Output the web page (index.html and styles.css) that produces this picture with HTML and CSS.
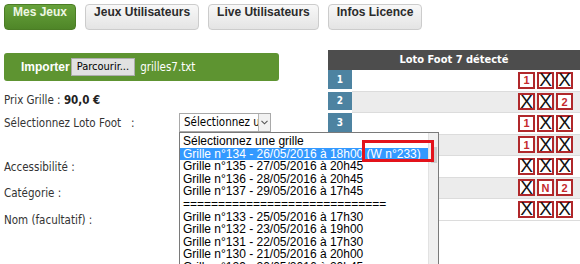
FILE: index.html
```html
<!DOCTYPE html>
<html lang="fr">
<head>
    <meta charset="UTF-8">
    <meta name="viewport" content="width=device-width, initial-scale=1.0">
    <title>Mes Jeux</title>
    <link rel="stylesheet" href="styles.css">
</head>
<body>
    <nav class="tabs">
        <a href="#" class="tab active">Mes Jeux</a>
        <a href="#" class="tab">Jeux Utilisateurs</a>
        <a href="#" class="tab">Live Utilisateurs</a>
        <a href="#" class="tab">Infos Licence</a>
    </nav>

    <div class="main">
        <div class="left">
            <div class="import">
                <b>Importer</b>
                <span class="browse">Parcourir...</span>
                <span class="filename">grilles7.txt</span>
            </div>

            <p class="field prix">Prix Grille : <b>90,0 €</b></p>

            <div class="select-row">
                <label>Sélectionnez Loto Foot &nbsp;&nbsp;:</label>
                <div class="select-wrap">
                    <div class="select">Sélectionnez une grille
                        <span class="arrow">
                            <svg width="7" height="5" viewBox="0 0 7 5"><path d="M0.5 0.8 L3.5 3.8 L6.5 0.8" fill="none" stroke="#555" stroke-width="1.1"/></svg>
                        </span>
                    </div>
                    <div class="dropdown">
                        <ul>
                            <li>Sélectionnez une grille</li>
                            <li class="sel">Grille n°134 - 26/05/2016 à 18h00 (W n°233)</li>
                            <li>Grille n°135 - 27/05/2016 à 20h45</li>
                            <li>Grille n°136 - 28/05/2016 à 20h45</li>
                            <li>Grille n°137 - 29/05/2016 à 17h45</li>
                            <li>=============================</li>
                            <li>Grille n°133 - 25/05/2016 à 17h30</li>
                            <li>Grille n°132 - 23/05/2016 à 19h00</li>
                            <li>Grille n°131 - 22/05/2016 à 17h30</li>
                            <li>Grille n°130 - 21/05/2016 à 20h00</li>
                            <li>Grille n°129 - 20/05/2016 à 20h45</li>
                        </ul>
                        <div class="scrollbar"><div class="thumb"></div></div>
                        <div class="mark"></div>
                    </div>
                </div>
            </div>

            <p class="field access">Accessibilité :</p>
            <p class="field cat">Catégorie :</p>
            <p class="field nom">Nom (facultatif) :</p>
        </div>

        <div class="panel">
            <div class="panel-head">Loto Foot 7 détecté</div>
            <div class="row"><span class="num">1</span><span class="picks"><span class="pick">1</span><span class="pick x">X</span><span class="pick x">X</span></span></div>
            <div class="row"><span class="num">2</span><span class="picks"><span class="pick x">X</span><span class="pick x">X</span><span class="pick">2</span></span></div>
            <div class="row"><span class="num">3</span><span class="picks"><span class="pick">1</span><span class="pick x">X</span><span class="pick x">X</span></span></div>
            <div class="row"><span class="num">4</span><span class="picks"><span class="pick">1</span><span class="pick x">X</span><span class="pick x">X</span></span></div>
            <div class="row"><span class="num">5</span><span class="picks"><span class="pick x">X</span><span class="pick x">X</span><span class="pick x">X</span></span></div>
            <div class="row"><span class="num">6</span><span class="picks"><span class="pick x">X</span><span class="pick">N</span><span class="pick">2</span></span></div>
            <div class="row"><span class="num">7</span><span class="picks"><span class="pick x">X</span><span class="pick x">X</span><span class="pick x">X</span></span></div>
        </div>
    </div>
</body>
</html>
```

FILE: styles.css
```css
* {
    margin: 0;
    padding: 0;
    box-sizing: border-box;
}

body {
    font-family: "DejaVu Sans Condensed", "Liberation Sans", sans-serif;
    font-size: 11.5px;
    color: #333;
    background-color: #fff;
    width: 580px;
    height: 264px;
    overflow: hidden;
}

/* Onglets */
.tabs {
    display: flex;
    gap: 9px;
    padding: 4px 0 0 4px;
}

.tab {
    height: 26px;
    line-height: 24px;
    padding: 0 8px;
    border: 1px solid #ccc;
    border-radius: 4px;
    background: linear-gradient(#f8f8f8, #e4e4e4);
    font: bold 12px "Liberation Sans", Arial, sans-serif;
    color: #2b2b2b;
    text-decoration: none;
}

.tab.active {
    background: linear-gradient(#67a23b, #4f8628);
    border-color: #4b7d25;
    color: #eef7e4;
}

.main {
    display: flex;
    margin-top: 20px;
}

.left {
    width: 275px;
    margin-left: 4px;
    position: relative;
    z-index: 2;
}

.import {
    margin-top: 3px;
    height: 28px;
    background-color: #5e9431;
    border-radius: 3px;
    display: flex;
    align-items: center;
    padding-left: 17px;
    color: #fff;
}

.import b {
    font: bold 12px "Liberation Sans", Arial, sans-serif;
}

.browse {
    margin-left: 1px;
    height: 18px;
    line-height: 16px;
    padding: 0 5px;
    background-color: #e1e1e1;
    border: 1px solid #adadad;
    color: #000;
    font-size: 11px;
}

.filename {
    margin-left: 5px;
}

.field {
    line-height: 14px;
}

.prix {
    margin-top: 12px;
}

.prix b {
    color: #222;
}

.select-row {
    display: flex;
    align-items: center;
    margin-top: 6px;
    height: 19px;
}

.select-row label {
    width: 175px;
}

.select-wrap {
    position: relative;
    width: 92px;
    height: 19px;
}

.select {
    position: relative;
    height: 19px;
    line-height: 17px;
    padding-left: 4px;
    border: 1px solid #a9a9a9;
    white-space: nowrap;
    overflow: hidden;
    color: #000;
}

.arrow {
    position: absolute;
    right: 0;
    top: 0;
    width: 12px;
    height: 17px;
    border-left: 1px solid #b5b5b5;
    background-color: #f1f1f1;
    display: flex;
    align-items: center;
    justify-content: center;
}

/* Liste deroulante ouverte */
.dropdown {
    position: absolute;
    left: 0;
    top: 19px;
    width: 260px;
    height: 140px;
    background-color: #fff;
    border: 1px solid #7a7a7a;
    overflow: hidden;
    color: #000;
}

.dropdown ul {
    list-style: none;
    padding-top: 2px;
    margin-right: 10px;
    font: 12px "Liberation Sans", Arial, sans-serif;
    line-height: 12.6px;
}

.dropdown li {
    padding-left: 3px;
    white-space: nowrap;
}

.dropdown li.sel {
    background-color: #3399ff;
    color: #fff;
}

.scrollbar {
    position: absolute;
    right: 0;
    top: 0;
    bottom: 0;
    width: 10px;
    background-color: #f0f0f0;
    border-left: 1px solid #e2e2e2;
}

.thumb {
    margin: 14px 1px 0 2px;
    height: 16px;
    background-color: #cdcdcd;
}

.mark {
    position: absolute;
    left: 182px;
    top: 7px;
    width: 72px;
    height: 22px;
    border: 3px solid #e3131b;
}

.access {
    margin-top: 28px;
}

.cat {
    margin-top: 12px;
}

.nom {
    margin-top: 13px;
}

/* Tableau des grilles */
.panel {
    margin-left: 49px;
    width: 252px;
}

.panel-head {
    height: 20px;
    line-height: 20px;
    background-color: #4d4d4d;
    color: #fff;
    font-weight: bold;
    font-size: 11px;
    text-align: center;
}

.row {
    display: flex;
    height: 21.5px;
}

.num {
    width: 24px;
    background-color: #4d83a1;
    border-bottom: 3px solid #fff;
    color: #fff;
    font-weight: bold;
    font-size: 10px;
    display: flex;
    align-items: center;
    justify-content: center;
}

.picks {
    flex: 1;
    display: flex;
    justify-content: flex-end;
    align-items: center;
    gap: 2px;
    padding-right: 7px;
    border-bottom: 1px solid #dcdcdc;
}

.row:nth-child(odd) .picks {
    background-color: #ececec;
}

.pick {
    width: 17px;
    height: 17px;
    border: 2px solid #b0282b;
    background-color: #fff;
    display: flex;
    align-items: center;
    justify-content: center;
    font: bold 11px "Liberation Sans", Arial, sans-serif;
    color: #c62a2e;
}

.pick.x {
    font: 19px "Liberation Sans", Arial, sans-serif;
    color: #111;
}
```
